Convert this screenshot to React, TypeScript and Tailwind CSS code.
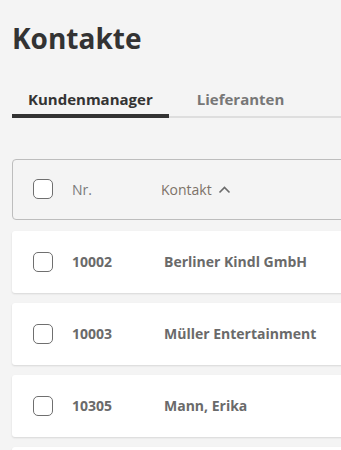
import React from "react";

type Contact = {
  nr: string;
  name: string;
};

const contacts: Contact[] = [
  { nr: "10002", name: "Berliner Kindl GmbH" },
  { nr: "10003", name: "Müller Entertainment" },
  { nr: "10305", name: "Mann, Erika" },
];

const Checkbox: React.FC = () => (
  <span className="block h-[20px] w-[20px] shrink-0 rounded-[5px] border-[1.5px] border-[#6f6f6f] bg-white" />
);

const App: React.FC = () => {
  return (
    <div
      className="h-[450px] w-full overflow-hidden bg-[#f4f4f4]"
      style={{ fontFamily: '"Open Sans", "Liberation Sans", sans-serif' }}
    >
      <div className="min-w-[380px] pl-3 pt-[18px]">
        {/* Title */}
        <h1 className="text-[28px] font-bold leading-[40px] text-[#333]">Kontakte</h1>

        {/* Tabs */}
        <div className="mt-[30px] flex border-b-[2px] border-[#dedede]">
          <button className="-mb-[2px] border-b-[4px] border-[#333] px-4 pb-[3px] text-[15px] font-bold text-[#333]">
            Kundenmanager
          </button>
          <button className="-mb-[2px] border-b-[4px] border-transparent pl-7 pb-[3px] text-[15px] font-bold text-[#777]">
            Lieferanten
          </button>
        </div>

        {/* Table head */}
        <div className="mt-[41px] flex h-[61px] items-center rounded-[4px] border border-[#bdbdbd] pl-[20px]">
          <Checkbox />
          <span className="ml-[19px] w-[89px] text-[14px] text-[#7a7a7a]">Nr.</span>
          <span className="flex items-center gap-[6px] text-[14px] text-[#7d7268]">
            Kontakt
            <svg width="13" height="9" viewBox="0 0 13 9" fill="none">
              <path d="M1.5 7.5 L6.5 2.5 L11.5 7.5" stroke="#6b6b6b" strokeWidth="1.6" />
            </svg>
          </span>
        </div>

        {/* Rows */}
        <div className="mt-[11px] flex flex-col gap-[10px]">
          {contacts.map((c) => (
            <div
              key={c.nr}
              className="flex h-[62px] items-center rounded-[3px] bg-white pl-[21px] shadow-[0_1px_2px_rgba(0,0,0,0.12)]"
            >
              <Checkbox />
              <span className="ml-[19px] w-[92px] text-[14px] font-bold text-[#6a6a6a]">{c.nr}</span>
              <span className="text-[14px] font-bold text-[#6a6a6a]">{c.name}</span>
            </div>
          ))}
          {/* next row, only its top edge is in view */}
          <div className="h-[62px] rounded-[3px] bg-white shadow-[0_1px_2px_rgba(0,0,0,0.12)]" />
        </div>
      </div>
    </div>
  );
};

export default App;
